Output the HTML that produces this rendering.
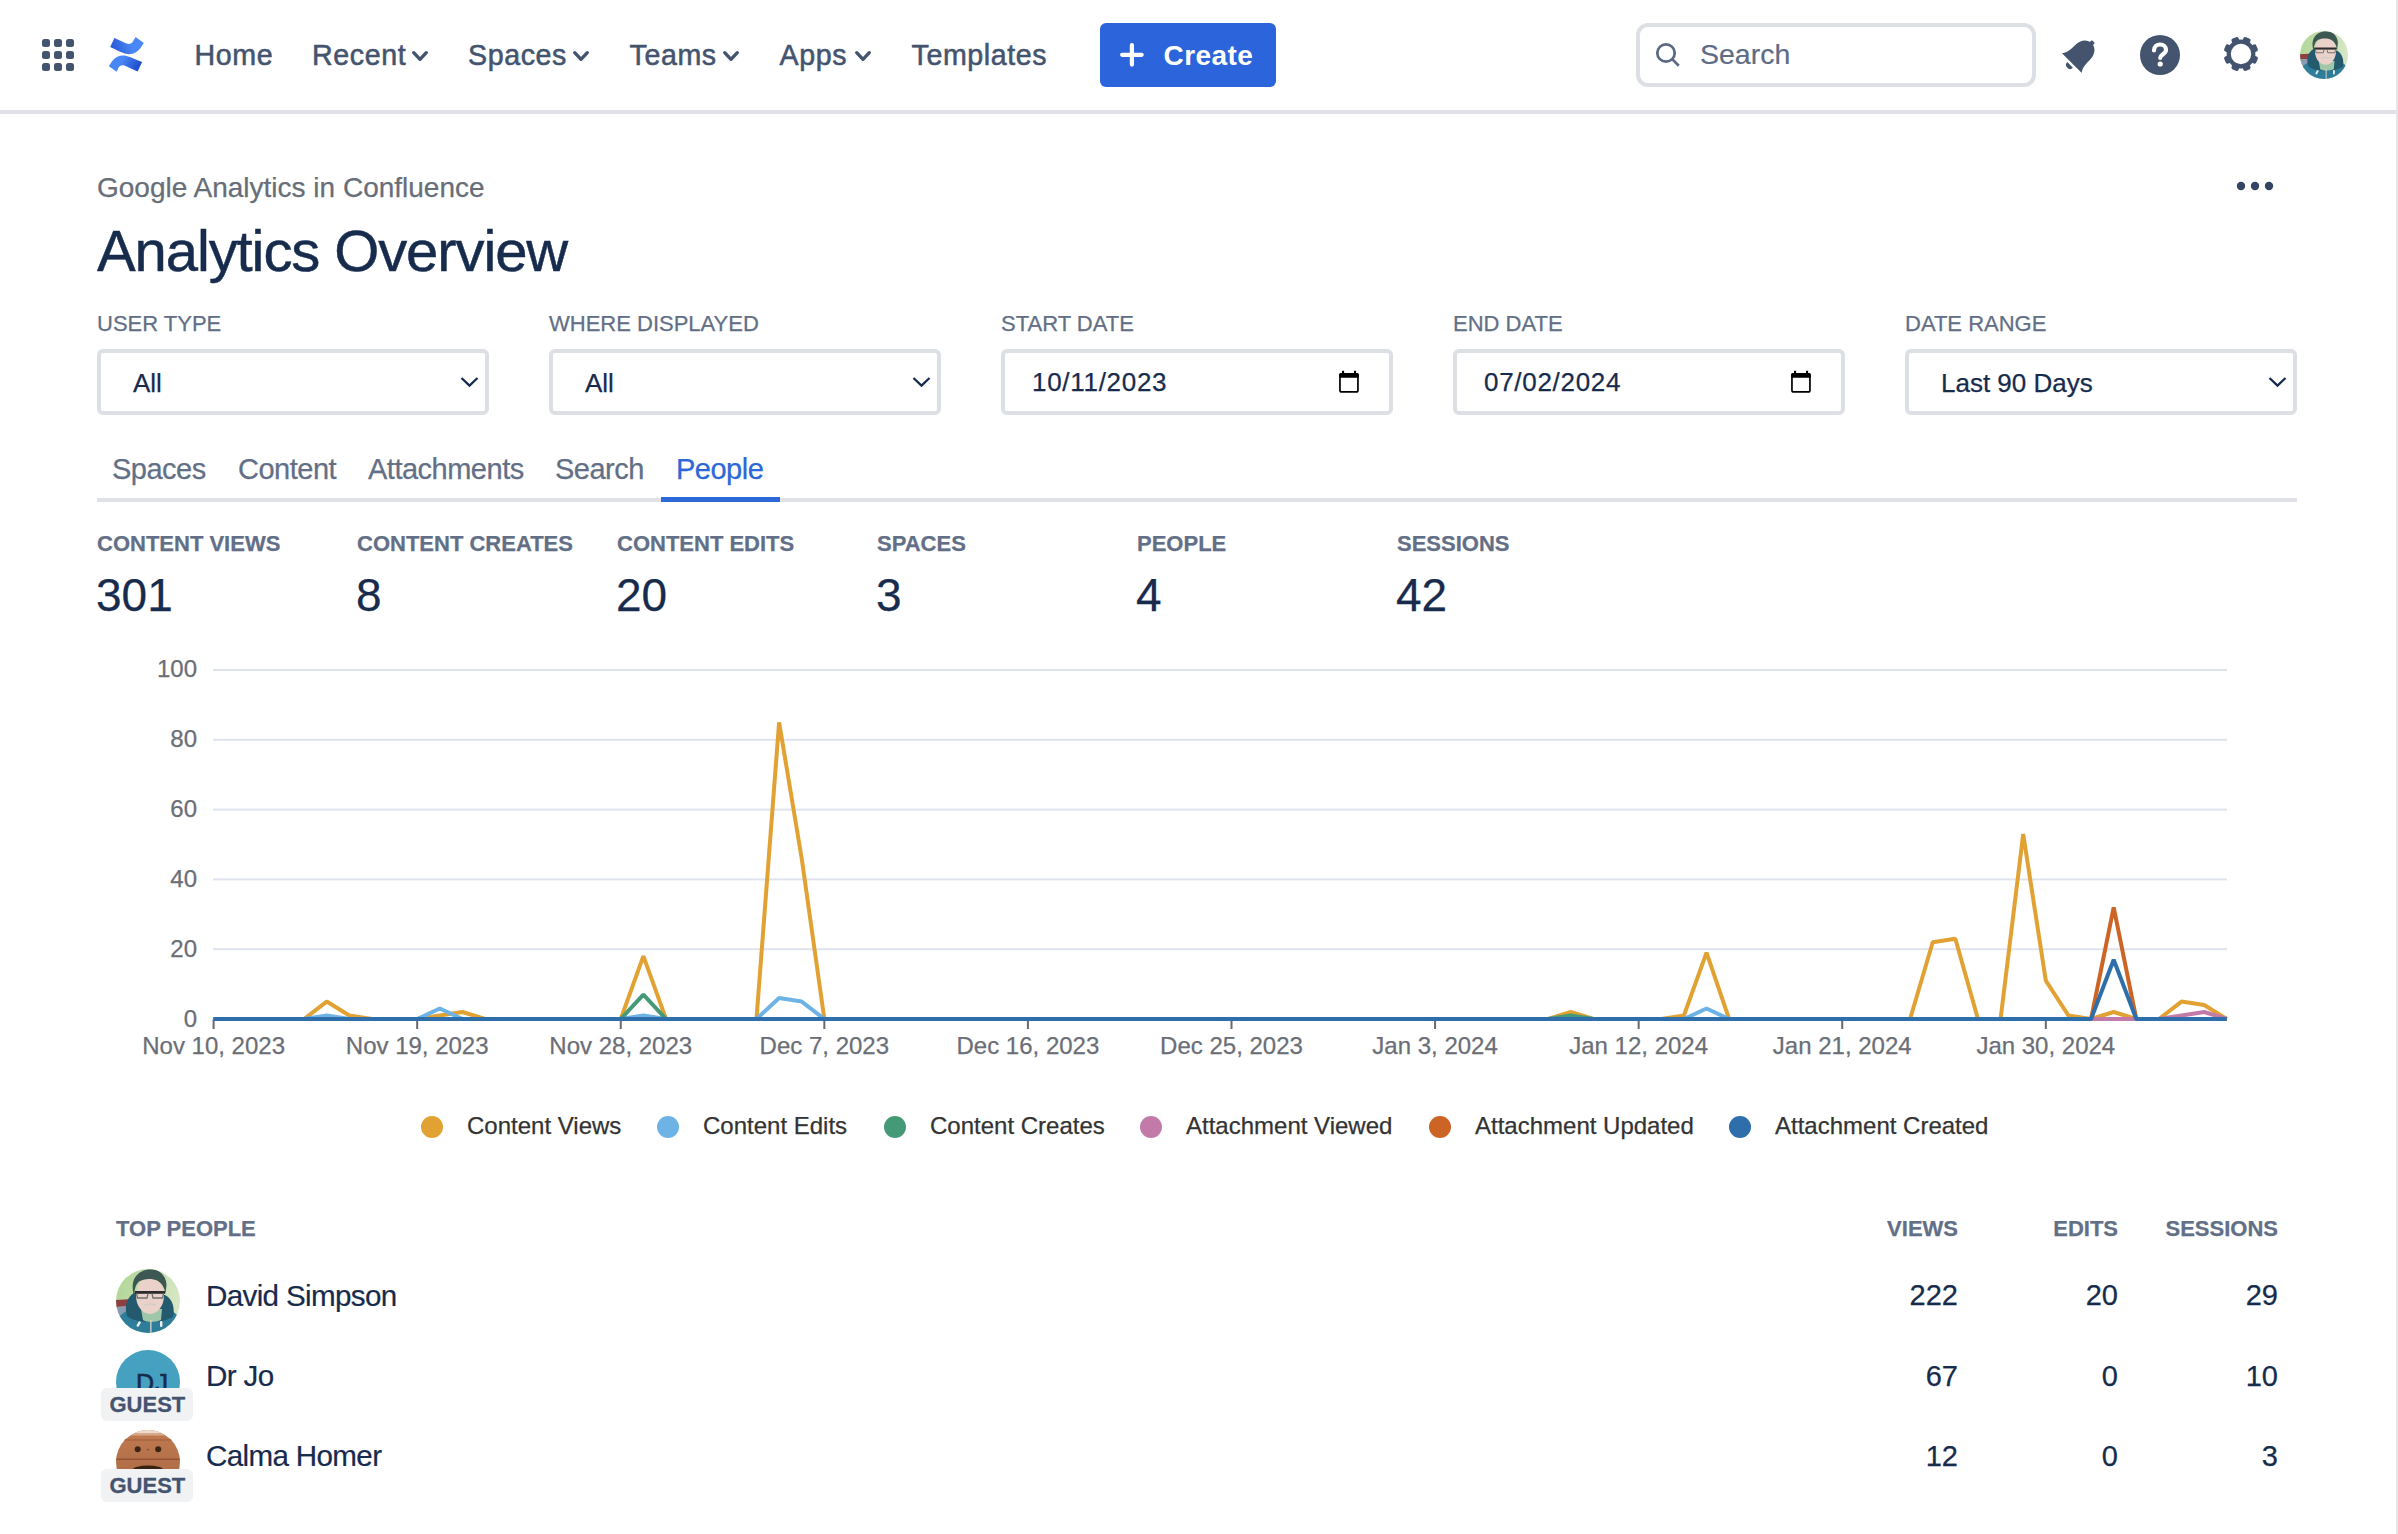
<!DOCTYPE html>
<html><head><meta charset="utf-8"><style>
html,body{margin:0;padding:0;background:#fff;}
body{width:2398px;height:1534px;overflow:hidden;position:relative;font-family:"Liberation Sans", sans-serif;}
.a{position:absolute;}
.t{position:absolute;white-space:nowrap;-webkit-text-stroke-width:0.25px;}
svg{display:block;}
</style></head><body>
<svg class="a" style="left:0;top:0" width="200" height="110"><rect x="42" y="39" width="8" height="8" rx="2.5" fill="#44546f"/><rect x="42" y="51" width="8" height="8" rx="2.5" fill="#44546f"/><rect x="42" y="63" width="8" height="8" rx="2.5" fill="#44546f"/><rect x="54" y="39" width="8" height="8" rx="2.5" fill="#44546f"/><rect x="54" y="51" width="8" height="8" rx="2.5" fill="#44546f"/><rect x="54" y="63" width="8" height="8" rx="2.5" fill="#44546f"/><rect x="66" y="39" width="8" height="8" rx="2.5" fill="#44546f"/><rect x="66" y="51" width="8" height="8" rx="2.5" fill="#44546f"/><rect x="66" y="63" width="8" height="8" rx="2.5" fill="#44546f"/></svg>
<svg class="a" style="left:106px;top:35px" width="40" height="40" viewBox="0 0 40 40">
<defs><linearGradient id="lg1" gradientUnits="userSpaceOnUse" x1="4" y1="12" x2="24" y2="6"><stop offset="0" stop-color="#2456d6"/><stop offset="1" stop-color="#4a87f6"/></linearGradient>
<linearGradient id="lg2" gradientUnits="userSpaceOnUse" x1="16" y1="26" x2="34" y2="36"><stop offset="0" stop-color="#4a87f6"/><stop offset="1" stop-color="#1543c4"/></linearGradient></defs>
<path fill="url(#lg1)" d="M8.4 2.9 L20.5 8.5 C23 9.6 25.3 8.8 26.8 6.8 L29.6 2.1 L37.8 8.1 L34.8 12.6 C31.8 17 27.5 19.3 22.5 19.2 C19.5 19.1 16.8 18 4.2 12 Z"/>
<path fill="url(#lg2)" d="M2.9 31.3 L6 26.3 C9 22 13 20.2 17.5 20.4 C20.5 20.5 23 21.5 36.1 27 L31.6 36.5 L19 30.8 C16.5 29.7 14 30.5 12.6 32.6 L10.7 36.8 Z"/></svg>
<div class="t" style="left:194.5px;top:41.19px;font-size:28.6px;line-height:28.6px;color:#44546f;font-weight:400;letter-spacing:0.6px;-webkit-text-stroke:0.55px #44546f;">Home</div>
<div class="t" style="left:312px;top:41.19px;font-size:28.6px;line-height:28.6px;color:#44546f;font-weight:400;letter-spacing:0.6px;-webkit-text-stroke:0.55px #44546f;">Recent</div>
<svg class="a" style="left:411px;top:50px" width="18" height="12"><path d="M2.70 2.70 L9.00 9.30 L15.30 2.70" fill="none" stroke="#44546f" stroke-width="3.4" stroke-linecap="round" stroke-linejoin="round"/></svg>
<div class="t" style="left:468px;top:41.19px;font-size:28.6px;line-height:28.6px;color:#44546f;font-weight:400;letter-spacing:0.6px;-webkit-text-stroke:0.55px #44546f;">Spaces</div>
<svg class="a" style="left:572px;top:50px" width="18" height="12"><path d="M2.70 2.70 L9.00 9.30 L15.30 2.70" fill="none" stroke="#44546f" stroke-width="3.4" stroke-linecap="round" stroke-linejoin="round"/></svg>
<div class="t" style="left:629.5px;top:41.19px;font-size:28.6px;line-height:28.6px;color:#44546f;font-weight:400;letter-spacing:0.6px;-webkit-text-stroke:0.55px #44546f;">Teams</div>
<svg class="a" style="left:722px;top:50px" width="18" height="12"><path d="M2.70 2.70 L9.00 9.30 L15.30 2.70" fill="none" stroke="#44546f" stroke-width="3.4" stroke-linecap="round" stroke-linejoin="round"/></svg>
<div class="t" style="left:779.5px;top:41.19px;font-size:28.6px;line-height:28.6px;color:#44546f;font-weight:400;letter-spacing:0.6px;-webkit-text-stroke:0.55px #44546f;">Apps</div>
<svg class="a" style="left:854px;top:50px" width="18" height="12"><path d="M2.70 2.70 L9.00 9.30 L15.30 2.70" fill="none" stroke="#44546f" stroke-width="3.4" stroke-linecap="round" stroke-linejoin="round"/></svg>
<div class="t" style="left:911.5px;top:41.19px;font-size:28.6px;line-height:28.6px;color:#44546f;font-weight:400;letter-spacing:0.6px;-webkit-text-stroke:0.55px #44546f;">Templates</div>
<div class="a" style="left:1100px;top:23px;width:176px;height:64px;border-radius:6px;background:#2c64db"></div>
<svg class="a" style="left:1118px;top:41px" width="28" height="28"><path d="M13.9 4.1 V23.6 M4.1 13.8 H23.7" stroke="#fff" stroke-width="4.2" stroke-linecap="round"/></svg>
<div class="t" style="left:1163.5px;top:42.30px;font-size:28px;line-height:28px;color:#fff;font-weight:700;letter-spacing:0.45px;-webkit-text-stroke-width:0;">Create</div>
<div class="a" style="left:1636px;top:23px;width:392px;height:56px;border:4px solid #dcdfe4;border-radius:12px;background:#fff"></div>
<svg class="a" style="left:1652px;top:38px" width="32" height="34"><circle cx="14" cy="15" r="8.7" fill="none" stroke="#5a6882" stroke-width="2.7"/><path d="M20.4 21.4 L26.8 27.8" stroke="#5a6882" stroke-width="2.7" stroke-linecap="butt"/></svg>
<div class="t" style="left:1700px;top:40.07px;font-size:28.5px;line-height:28.5px;color:#5e6c84;font-weight:400;-webkit-text-stroke:0.2px #5e6c84;">Search</div>
<svg class="a" style="left:2058px;top:33px" width="44" height="44" viewBox="0 0 44 44"><g transform="rotate(45 22 22)">
<path d="M8 33.5 L36 33.5 C33 30 32.5 26 32.5 19 C32.5 10.5 28 5.5 22 5.5 C16 5.5 11.5 10.5 11.5 19 C11.5 26 11 30 8 33.5 Z" fill="#44546f"/>
<rect x="19.8" y="3" width="4.4" height="4" rx="1.2" fill="#44546f"/>
<path d="M18 36 A4 4 0 0 0 26 36 Z" fill="#44546f"/></g></svg>
<svg class="a" style="left:2138px;top:33px" width="44" height="44"><circle cx="22" cy="22" r="20" fill="#44546f"/><path d="M16 17.5 C16 13.5 18.8 11.5 22 11.5 C25.5 11.5 28 13.8 28 17 C28 21 22.2 21.5 22.2 25" fill="none" stroke="#fff" stroke-width="4.2" stroke-linecap="round"/><circle cx="22.2" cy="31" r="2.6" fill="#fff"/></svg>
<svg class="a" style="left:2218px;top:31px" width="46" height="46"><rect x="19.2" y="5.6" width="7.6" height="6.5" rx="2" fill="#44546f" transform="rotate(22.5 23 23)"/><rect x="19.2" y="5.6" width="7.6" height="6.5" rx="2" fill="#44546f" transform="rotate(67.5 23 23)"/><rect x="19.2" y="5.6" width="7.6" height="6.5" rx="2" fill="#44546f" transform="rotate(112.5 23 23)"/><rect x="19.2" y="5.6" width="7.6" height="6.5" rx="2" fill="#44546f" transform="rotate(157.5 23 23)"/><rect x="19.2" y="5.6" width="7.6" height="6.5" rx="2" fill="#44546f" transform="rotate(202.5 23 23)"/><rect x="19.2" y="5.6" width="7.6" height="6.5" rx="2" fill="#44546f" transform="rotate(247.5 23 23)"/><rect x="19.2" y="5.6" width="7.6" height="6.5" rx="2" fill="#44546f" transform="rotate(292.5 23 23)"/><rect x="19.2" y="5.6" width="7.6" height="6.5" rx="2" fill="#44546f" transform="rotate(337.5 23 23)"/><circle cx="23" cy="23" r="12.3" fill="none" stroke="#44546f" stroke-width="4.2"/></svg>
<svg class="a" style="left:2300px;top:31px" width="48" height="48" viewBox="0 0 64 64">
<defs><clipPath id="av1"><circle cx="32" cy="32" r="32"/></clipPath>
<linearGradient id="av1g" x1="0" y1="0" x2="1" y2="0.3"><stop offset="0" stop-color="#b0d595"/><stop offset="0.6" stop-color="#c4dfb0"/><stop offset="1" stop-color="#d6e6c4"/></linearGradient></defs>
<g clip-path="url(#av1)"><rect width="64" height="64" fill="url(#av1g)"/>
<path d="M0 31 L17 30 L17 37 L0 38Z" fill="#8e3f42"/>
<path d="M0 38 L15 37 L13 48 L0 50Z" fill="#8a9cb4"/>
<path d="M0 64 L1 50 C6 44 11 42 14 40 L52 40 C57 42 62 46 64 50 L64 64Z" fill="#2e7d9a"/>
<path d="M11 47 C8 37 11 28 18 24 L49 26 C57 30 59 40 57 48 C51 51 44 53 34 53 C24 53 16 51 11 47Z" fill="#235a6e"/>
<path d="M25 40 L46 40 L45 51 C40 53.5 30 53.5 27 51Z" fill="#9fc8aa"/>
<ellipse cx="34" cy="26.5" rx="14" ry="18.5" fill="#ead2ca"/>
<path d="M17.5 25 C15.5 16 17 9 22 5 C26 1 34 -1 40 1 C46 3 50.5 9 50.5 16 L49.5 25 C48.5 19 46.5 15 42 12 C36 9 28 9.5 23 12.5 C20 15 18.5 19 18.5 25Z" fill="#3d5753"/>
<rect x="19" y="22" width="30" height="2.8" fill="#2c2c2c"/>
<path d="M20.5 24.5 L21.5 29 L31 29 L32 24.5 M36 24.5 L37 29 L46.5 29 L47.5 24.5" fill="none" stroke="#707070" stroke-width="1.3"/>
<path d="M28 36.5 C32 35 37 35 40 36.5" stroke="#d6cdc6" stroke-width="1.8" fill="none"/>
<rect x="21.5" y="52" width="2.4" height="6" rx="1.1" fill="#eeeeea" transform="rotate(30 22.7 55)"/>
<rect x="44" y="52" width="2.4" height="6" rx="1.1" fill="#eeeeea"/>
<rect x="34.2" y="51" width="1.3" height="13" fill="#d8d8c8"/></g></svg>
<div class="a" style="left:0;top:110px;width:2396px;height:4px;background:#dfe1e6"></div>
<div class="a" style="left:2396px;top:0;width:2px;height:1534px;background:#e6e6e6"></div>
<div class="t" style="left:97px;top:174.30px;font-size:28px;line-height:28px;color:#676e78;font-weight:400;-webkit-text-stroke:0.25px #676e78;">Google Analytics in Confluence</div>
<div class="t" style="left:97px;top:221.90px;font-size:58px;line-height:58px;color:#172b4d;font-weight:400;letter-spacing:-1.1px;-webkit-text-stroke:0.5px #172b4d;">Analytics Overview</div>
<svg class="a" style="left:2233px;top:176px" width="50" height="20"><circle cx="8" cy="10" r="4.2" fill="#344563"/><circle cx="22" cy="10" r="4.2" fill="#344563"/><circle cx="36" cy="10" r="4.2" fill="#344563"/></svg>
<div class="t" style="left:97px;top:312.98px;font-size:22px;line-height:22px;color:#626f86;font-weight:400;">USER TYPE</div>
<div class="a" style="left:97px;top:349px;width:384px;height:58px;border:4px solid #dcdfe4;border-radius:6px;background:#fff"></div>
<div class="t" style="left:133px;top:369.99px;font-size:26px;line-height:26px;color:#172b4d;font-weight:400;">All</div>
<svg class="a" style="left:460px;top:376px" width="20" height="14"><path d="M1.5 2 L9.5 9.6 L17.5 2" fill="none" stroke="#172b4d" stroke-width="2.3" stroke-linejoin="miter"/></svg>
<div class="t" style="left:549px;top:312.98px;font-size:22px;line-height:22px;color:#626f86;font-weight:400;">WHERE DISPLAYED</div>
<div class="a" style="left:549px;top:349px;width:384px;height:58px;border:4px solid #dcdfe4;border-radius:6px;background:#fff"></div>
<div class="t" style="left:585px;top:369.99px;font-size:26px;line-height:26px;color:#172b4d;font-weight:400;">All</div>
<svg class="a" style="left:912px;top:376px" width="20" height="14"><path d="M1.5 2 L9.5 9.6 L17.5 2" fill="none" stroke="#172b4d" stroke-width="2.3" stroke-linejoin="miter"/></svg>
<div class="t" style="left:1001px;top:312.98px;font-size:22px;line-height:22px;color:#626f86;font-weight:400;">START DATE</div>
<div class="a" style="left:1001px;top:349px;width:384px;height:58px;border:4px solid #dcdfe4;border-radius:6px;background:#fff"></div>
<div class="t" style="left:1032px;top:368.99px;font-size:26px;line-height:26px;color:#172b4d;font-weight:400;letter-spacing:0.7px;">10/11/2023</div>
<svg class="a" style="left:1337px;top:369px" width="24" height="26"><rect x="2.95" y="4.75" width="18" height="18.2" rx="1.8" fill="none" stroke="#000" stroke-width="1.7"/><rect x="2.1" y="3.9" width="19.7" height="4.9" rx="1.5" fill="#000"/><rect x="5" y="1.8" width="2.1" height="3" fill="#000"/><rect x="17" y="1.8" width="2.1" height="3" fill="#000"/></svg>
<div class="t" style="left:1453px;top:312.98px;font-size:22px;line-height:22px;color:#626f86;font-weight:400;">END DATE</div>
<div class="a" style="left:1453px;top:349px;width:384px;height:58px;border:4px solid #dcdfe4;border-radius:6px;background:#fff"></div>
<div class="t" style="left:1484px;top:368.99px;font-size:26px;line-height:26px;color:#172b4d;font-weight:400;letter-spacing:0.7px;">07/02/2024</div>
<svg class="a" style="left:1789px;top:369px" width="24" height="26"><rect x="2.95" y="4.75" width="18" height="18.2" rx="1.8" fill="none" stroke="#000" stroke-width="1.7"/><rect x="2.1" y="3.9" width="19.7" height="4.9" rx="1.5" fill="#000"/><rect x="5" y="1.8" width="2.1" height="3" fill="#000"/><rect x="17" y="1.8" width="2.1" height="3" fill="#000"/></svg>
<div class="t" style="left:1905px;top:312.98px;font-size:22px;line-height:22px;color:#626f86;font-weight:400;">DATE RANGE</div>
<div class="a" style="left:1905px;top:349px;width:384px;height:58px;border:4px solid #dcdfe4;border-radius:6px;background:#fff"></div>
<div class="t" style="left:1941px;top:369.99px;font-size:26px;line-height:26px;color:#172b4d;font-weight:400;">Last 90 Days</div>
<svg class="a" style="left:2268px;top:376px" width="20" height="14"><path d="M1.5 2 L9.5 9.6 L17.5 2" fill="none" stroke="#172b4d" stroke-width="2.3" stroke-linejoin="miter"/></svg>
<div class="t" style="left:112px;top:455.45px;font-size:29px;line-height:29px;color:#626f86;font-weight:400;letter-spacing:-0.5px;">Spaces</div>
<div class="t" style="left:238px;top:455.45px;font-size:29px;line-height:29px;color:#626f86;font-weight:400;letter-spacing:-0.5px;">Content</div>
<div class="t" style="left:368px;top:455.45px;font-size:29px;line-height:29px;color:#626f86;font-weight:400;letter-spacing:-0.5px;">Attachments</div>
<div class="t" style="left:555px;top:455.45px;font-size:29px;line-height:29px;color:#626f86;font-weight:400;letter-spacing:-0.5px;">Search</div>
<div class="t" style="left:676px;top:455.45px;font-size:29px;line-height:29px;color:#2d68d8;font-weight:400;letter-spacing:-0.5px;">People</div>
<div class="a" style="left:97px;top:498px;width:2200px;height:4px;background:#dfe1e6"></div>
<div class="a" style="left:661px;top:497px;width:119px;height:5px;background:#2d68d8"></div>
<div class="t" style="left:97px;top:533.38px;font-size:22px;line-height:22px;color:#626f86;font-weight:700;">CONTENT VIEWS</div>
<div class="t" style="left:96px;top:572.06px;font-size:46px;line-height:46px;color:#172b4d;font-weight:400;">301</div>
<div class="t" style="left:357px;top:533.38px;font-size:22px;line-height:22px;color:#626f86;font-weight:700;">CONTENT CREATES</div>
<div class="t" style="left:356px;top:572.06px;font-size:46px;line-height:46px;color:#172b4d;font-weight:400;">8</div>
<div class="t" style="left:617px;top:533.38px;font-size:22px;line-height:22px;color:#626f86;font-weight:700;">CONTENT EDITS</div>
<div class="t" style="left:616px;top:572.06px;font-size:46px;line-height:46px;color:#172b4d;font-weight:400;">20</div>
<div class="t" style="left:877px;top:533.38px;font-size:22px;line-height:22px;color:#626f86;font-weight:700;">SPACES</div>
<div class="t" style="left:876px;top:572.06px;font-size:46px;line-height:46px;color:#172b4d;font-weight:400;">3</div>
<div class="t" style="left:1137px;top:533.38px;font-size:22px;line-height:22px;color:#626f86;font-weight:700;">PEOPLE</div>
<div class="t" style="left:1136px;top:572.06px;font-size:46px;line-height:46px;color:#172b4d;font-weight:400;">4</div>
<div class="t" style="left:1397px;top:533.38px;font-size:22px;line-height:22px;color:#626f86;font-weight:700;">SESSIONS</div>
<div class="t" style="left:1396px;top:572.06px;font-size:46px;line-height:46px;color:#172b4d;font-weight:400;">42</div>
<svg class="a" style="left:0;top:0" width="2398" height="1100"><rect x="213" y="948.2" width="2014" height="2" fill="#dfe3ee"/><rect x="213" y="878.4" width="2014" height="2" fill="#dfe3ee"/><rect x="213" y="808.6" width="2014" height="2" fill="#dfe3ee"/><rect x="213" y="738.8" width="2014" height="2" fill="#dfe3ee"/><rect x="213" y="669.0" width="2014" height="2" fill="#dfe3ee"/><rect x="212.6" y="1019" width="2" height="10" fill="#666a73"/><rect x="416.18" y="1019" width="2" height="10" fill="#666a73"/><rect x="619.76" y="1019" width="2" height="10" fill="#666a73"/><rect x="823.34" y="1019" width="2" height="10" fill="#666a73"/><rect x="1026.92" y="1019" width="2" height="10" fill="#666a73"/><rect x="1230.5" y="1019" width="2" height="10" fill="#666a73"/><rect x="1434.08" y="1019" width="2" height="10" fill="#666a73"/><rect x="1637.66" y="1019" width="2" height="10" fill="#666a73"/><rect x="1841.24" y="1019" width="2" height="10" fill="#666a73"/><rect x="2044.82" y="1019" width="2" height="10" fill="#666a73"/><polyline points="213.60,1019.00 236.22,1019.00 258.84,1019.00 281.46,1019.00 304.08,1019.00 326.70,1001.55 349.32,1015.51 371.94,1019.00 394.56,1019.00 417.18,1019.00 439.80,1015.51 462.42,1012.02 485.04,1019.00 507.66,1019.00 530.28,1019.00 552.90,1019.00 575.52,1019.00 598.14,1019.00 620.76,1019.00 643.38,956.18 666.00,1019.00 688.62,1019.00 711.24,1019.00 733.86,1019.00 756.48,1019.00 779.10,722.35 801.72,858.46 824.34,1019.00 846.96,1019.00 869.58,1019.00 892.20,1019.00 914.82,1019.00 937.44,1019.00 960.06,1019.00 982.68,1019.00 1005.30,1019.00 1027.92,1019.00 1050.54,1019.00 1073.16,1019.00 1095.78,1019.00 1118.40,1019.00 1141.02,1019.00 1163.64,1019.00 1186.26,1019.00 1208.88,1019.00 1231.50,1019.00 1254.12,1019.00 1276.74,1019.00 1299.36,1019.00 1321.98,1019.00 1344.60,1019.00 1367.22,1019.00 1389.84,1019.00 1412.46,1019.00 1435.08,1019.00 1457.70,1019.00 1480.32,1019.00 1502.94,1019.00 1525.56,1019.00 1548.18,1019.00 1570.80,1012.02 1593.42,1019.00 1616.04,1019.00 1638.66,1019.00 1661.28,1019.00 1683.90,1015.51 1706.52,952.69 1729.14,1019.00 1751.76,1019.00 1774.38,1019.00 1797.00,1019.00 1819.62,1019.00 1842.24,1019.00 1864.86,1019.00 1887.48,1019.00 1910.10,1019.00 1932.72,942.22 1955.34,938.73 1977.96,1019.00 2000.58,1019.00 2023.20,834.03 2045.82,980.61 2068.44,1015.51 2091.06,1019.00 2113.68,1012.02 2136.30,1019.00 2158.92,1019.00 2181.54,1001.55 2204.16,1005.04 2226.78,1019.00" fill="none" stroke="#e2a233" stroke-width="4" stroke-linejoin="bevel" stroke-linecap="butt"/><polyline points="213.60,1019.00 236.22,1019.00 258.84,1019.00 281.46,1019.00 304.08,1019.00 326.70,1015.51 349.32,1019.00 371.94,1019.00 394.56,1019.00 417.18,1019.00 439.80,1008.53 462.42,1019.00 485.04,1019.00 507.66,1019.00 530.28,1019.00 552.90,1019.00 575.52,1019.00 598.14,1019.00 620.76,1019.00 643.38,1015.51 666.00,1019.00 688.62,1019.00 711.24,1019.00 733.86,1019.00 756.48,1019.00 779.10,998.06 801.72,1001.55 824.34,1019.00 846.96,1019.00 869.58,1019.00 892.20,1019.00 914.82,1019.00 937.44,1019.00 960.06,1019.00 982.68,1019.00 1005.30,1019.00 1027.92,1019.00 1050.54,1019.00 1073.16,1019.00 1095.78,1019.00 1118.40,1019.00 1141.02,1019.00 1163.64,1019.00 1186.26,1019.00 1208.88,1019.00 1231.50,1019.00 1254.12,1019.00 1276.74,1019.00 1299.36,1019.00 1321.98,1019.00 1344.60,1019.00 1367.22,1019.00 1389.84,1019.00 1412.46,1019.00 1435.08,1019.00 1457.70,1019.00 1480.32,1019.00 1502.94,1019.00 1525.56,1019.00 1548.18,1019.00 1570.80,1019.00 1593.42,1019.00 1616.04,1019.00 1638.66,1019.00 1661.28,1019.00 1683.90,1019.00 1706.52,1008.53 1729.14,1019.00 1751.76,1019.00 1774.38,1019.00 1797.00,1019.00 1819.62,1019.00 1842.24,1019.00 1864.86,1019.00 1887.48,1019.00 1910.10,1019.00 1932.72,1019.00 1955.34,1019.00 1977.96,1019.00 2000.58,1019.00 2023.20,1019.00 2045.82,1019.00 2068.44,1019.00 2091.06,1019.00 2113.68,1019.00 2136.30,1019.00 2158.92,1019.00 2181.54,1019.00 2204.16,1019.00 2226.78,1019.00" fill="none" stroke="#6db3e6" stroke-width="4" stroke-linejoin="bevel" stroke-linecap="butt"/><polyline points="213.60,1019.00 236.22,1019.00 258.84,1019.00 281.46,1019.00 304.08,1019.00 326.70,1019.00 349.32,1019.00 371.94,1019.00 394.56,1019.00 417.18,1019.00 439.80,1019.00 462.42,1019.00 485.04,1019.00 507.66,1019.00 530.28,1019.00 552.90,1019.00 575.52,1019.00 598.14,1019.00 620.76,1019.00 643.38,994.57 666.00,1019.00 688.62,1019.00 711.24,1019.00 733.86,1019.00 756.48,1019.00 779.10,1019.00 801.72,1019.00 824.34,1019.00 846.96,1019.00 869.58,1019.00 892.20,1019.00 914.82,1019.00 937.44,1019.00 960.06,1019.00 982.68,1019.00 1005.30,1019.00 1027.92,1019.00 1050.54,1019.00 1073.16,1019.00 1095.78,1019.00 1118.40,1019.00 1141.02,1019.00 1163.64,1019.00 1186.26,1019.00 1208.88,1019.00 1231.50,1019.00 1254.12,1019.00 1276.74,1019.00 1299.36,1019.00 1321.98,1019.00 1344.60,1019.00 1367.22,1019.00 1389.84,1019.00 1412.46,1019.00 1435.08,1019.00 1457.70,1019.00 1480.32,1019.00 1502.94,1019.00 1525.56,1019.00 1548.18,1019.00 1570.80,1015.51 1593.42,1019.00 1616.04,1019.00 1638.66,1019.00 1661.28,1019.00 1683.90,1019.00 1706.52,1019.00 1729.14,1019.00 1751.76,1019.00 1774.38,1019.00 1797.00,1019.00 1819.62,1019.00 1842.24,1019.00 1864.86,1019.00 1887.48,1019.00 1910.10,1019.00 1932.72,1019.00 1955.34,1019.00 1977.96,1019.00 2000.58,1019.00 2023.20,1019.00 2045.82,1019.00 2068.44,1019.00 2091.06,1019.00 2113.68,1019.00 2136.30,1019.00 2158.92,1019.00 2181.54,1019.00 2204.16,1019.00 2226.78,1019.00" fill="none" stroke="#449a76" stroke-width="4" stroke-linejoin="bevel" stroke-linecap="butt"/><polyline points="213.60,1019.00 236.22,1019.00 258.84,1019.00 281.46,1019.00 304.08,1019.00 326.70,1019.00 349.32,1019.00 371.94,1019.00 394.56,1019.00 417.18,1019.00 439.80,1019.00 462.42,1019.00 485.04,1019.00 507.66,1019.00 530.28,1019.00 552.90,1019.00 575.52,1019.00 598.14,1019.00 620.76,1019.00 643.38,1019.00 666.00,1019.00 688.62,1019.00 711.24,1019.00 733.86,1019.00 756.48,1019.00 779.10,1019.00 801.72,1019.00 824.34,1019.00 846.96,1019.00 869.58,1019.00 892.20,1019.00 914.82,1019.00 937.44,1019.00 960.06,1019.00 982.68,1019.00 1005.30,1019.00 1027.92,1019.00 1050.54,1019.00 1073.16,1019.00 1095.78,1019.00 1118.40,1019.00 1141.02,1019.00 1163.64,1019.00 1186.26,1019.00 1208.88,1019.00 1231.50,1019.00 1254.12,1019.00 1276.74,1019.00 1299.36,1019.00 1321.98,1019.00 1344.60,1019.00 1367.22,1019.00 1389.84,1019.00 1412.46,1019.00 1435.08,1019.00 1457.70,1019.00 1480.32,1019.00 1502.94,1019.00 1525.56,1019.00 1548.18,1019.00 1570.80,1019.00 1593.42,1019.00 1616.04,1019.00 1638.66,1019.00 1661.28,1019.00 1683.90,1019.00 1706.52,1019.00 1729.14,1019.00 1751.76,1019.00 1774.38,1019.00 1797.00,1019.00 1819.62,1019.00 1842.24,1019.00 1864.86,1019.00 1887.48,1019.00 1910.10,1019.00 1932.72,1019.00 1955.34,1019.00 1977.96,1019.00 2000.58,1019.00 2023.20,1019.00 2045.82,1019.00 2068.44,1019.00 2091.06,1019.00 2113.68,1019.00 2136.30,1019.00 2158.92,1019.00 2181.54,1015.51 2204.16,1012.02 2226.78,1019.00" fill="none" stroke="#c27ba9" stroke-width="4" stroke-linejoin="bevel" stroke-linecap="butt"/><polyline points="213.60,1019.00 236.22,1019.00 258.84,1019.00 281.46,1019.00 304.08,1019.00 326.70,1019.00 349.32,1019.00 371.94,1019.00 394.56,1019.00 417.18,1019.00 439.80,1019.00 462.42,1019.00 485.04,1019.00 507.66,1019.00 530.28,1019.00 552.90,1019.00 575.52,1019.00 598.14,1019.00 620.76,1019.00 643.38,1019.00 666.00,1019.00 688.62,1019.00 711.24,1019.00 733.86,1019.00 756.48,1019.00 779.10,1019.00 801.72,1019.00 824.34,1019.00 846.96,1019.00 869.58,1019.00 892.20,1019.00 914.82,1019.00 937.44,1019.00 960.06,1019.00 982.68,1019.00 1005.30,1019.00 1027.92,1019.00 1050.54,1019.00 1073.16,1019.00 1095.78,1019.00 1118.40,1019.00 1141.02,1019.00 1163.64,1019.00 1186.26,1019.00 1208.88,1019.00 1231.50,1019.00 1254.12,1019.00 1276.74,1019.00 1299.36,1019.00 1321.98,1019.00 1344.60,1019.00 1367.22,1019.00 1389.84,1019.00 1412.46,1019.00 1435.08,1019.00 1457.70,1019.00 1480.32,1019.00 1502.94,1019.00 1525.56,1019.00 1548.18,1019.00 1570.80,1019.00 1593.42,1019.00 1616.04,1019.00 1638.66,1019.00 1661.28,1019.00 1683.90,1019.00 1706.52,1019.00 1729.14,1019.00 1751.76,1019.00 1774.38,1019.00 1797.00,1019.00 1819.62,1019.00 1842.24,1019.00 1864.86,1019.00 1887.48,1019.00 1910.10,1019.00 1932.72,1019.00 1955.34,1019.00 1977.96,1019.00 2000.58,1019.00 2023.20,1019.00 2045.82,1019.00 2068.44,1019.00 2091.06,1019.00 2113.68,907.32 2136.30,1019.00 2158.92,1019.00 2181.54,1019.00 2204.16,1019.00 2226.78,1019.00" fill="none" stroke="#cc6425" stroke-width="4" stroke-linejoin="bevel" stroke-linecap="butt"/><polyline points="213.60,1019.00 236.22,1019.00 258.84,1019.00 281.46,1019.00 304.08,1019.00 326.70,1019.00 349.32,1019.00 371.94,1019.00 394.56,1019.00 417.18,1019.00 439.80,1019.00 462.42,1019.00 485.04,1019.00 507.66,1019.00 530.28,1019.00 552.90,1019.00 575.52,1019.00 598.14,1019.00 620.76,1019.00 643.38,1019.00 666.00,1019.00 688.62,1019.00 711.24,1019.00 733.86,1019.00 756.48,1019.00 779.10,1019.00 801.72,1019.00 824.34,1019.00 846.96,1019.00 869.58,1019.00 892.20,1019.00 914.82,1019.00 937.44,1019.00 960.06,1019.00 982.68,1019.00 1005.30,1019.00 1027.92,1019.00 1050.54,1019.00 1073.16,1019.00 1095.78,1019.00 1118.40,1019.00 1141.02,1019.00 1163.64,1019.00 1186.26,1019.00 1208.88,1019.00 1231.50,1019.00 1254.12,1019.00 1276.74,1019.00 1299.36,1019.00 1321.98,1019.00 1344.60,1019.00 1367.22,1019.00 1389.84,1019.00 1412.46,1019.00 1435.08,1019.00 1457.70,1019.00 1480.32,1019.00 1502.94,1019.00 1525.56,1019.00 1548.18,1019.00 1570.80,1019.00 1593.42,1019.00 1616.04,1019.00 1638.66,1019.00 1661.28,1019.00 1683.90,1019.00 1706.52,1019.00 1729.14,1019.00 1751.76,1019.00 1774.38,1019.00 1797.00,1019.00 1819.62,1019.00 1842.24,1019.00 1864.86,1019.00 1887.48,1019.00 1910.10,1019.00 1932.72,1019.00 1955.34,1019.00 1977.96,1019.00 2000.58,1019.00 2023.20,1019.00 2045.82,1019.00 2068.44,1019.00 2091.06,1019.00 2113.68,959.67 2136.30,1019.00 2158.92,1019.00 2181.54,1019.00 2204.16,1019.00 2226.78,1019.00" fill="none" stroke="#2d6eab" stroke-width="4" stroke-linejoin="bevel" stroke-linecap="butt"/></svg>
<div class="t" style="right:2201px;top:1007.18px;font-size:24px;line-height:24px;color:#6b6e76;font-weight:400;">0</div>
<div class="t" style="right:2201px;top:937.18px;font-size:24px;line-height:24px;color:#6b6e76;font-weight:400;">20</div>
<div class="t" style="right:2201px;top:867.18px;font-size:24px;line-height:24px;color:#6b6e76;font-weight:400;">40</div>
<div class="t" style="right:2201px;top:797.18px;font-size:24px;line-height:24px;color:#6b6e76;font-weight:400;">60</div>
<div class="t" style="right:2201px;top:727.18px;font-size:24px;line-height:24px;color:#6b6e76;font-weight:400;">80</div>
<div class="t" style="right:2201px;top:657.18px;font-size:24px;line-height:24px;color:#6b6e76;font-weight:400;">100</div>
<div class="t" style="left:-286.4px;width:1000px;text-align:center;top:1034.08px;font-size:24px;line-height:24px;color:#6b6e76;font-weight:400;">Nov 10, 2023</div>
<div class="t" style="left:-82.82px;width:1000px;text-align:center;top:1034.08px;font-size:24px;line-height:24px;color:#6b6e76;font-weight:400;">Nov 19, 2023</div>
<div class="t" style="left:120.75999999999999px;width:1000px;text-align:center;top:1034.08px;font-size:24px;line-height:24px;color:#6b6e76;font-weight:400;">Nov 28, 2023</div>
<div class="t" style="left:324.34000000000003px;width:1000px;text-align:center;top:1034.08px;font-size:24px;line-height:24px;color:#6b6e76;font-weight:400;">Dec 7, 2023</div>
<div class="t" style="left:527.9200000000001px;width:1000px;text-align:center;top:1034.08px;font-size:24px;line-height:24px;color:#6b6e76;font-weight:400;">Dec 16, 2023</div>
<div class="t" style="left:731.5px;width:1000px;text-align:center;top:1034.08px;font-size:24px;line-height:24px;color:#6b6e76;font-weight:400;">Dec 25, 2023</div>
<div class="t" style="left:935.0799999999999px;width:1000px;text-align:center;top:1034.08px;font-size:24px;line-height:24px;color:#6b6e76;font-weight:400;">Jan 3, 2024</div>
<div class="t" style="left:1138.66px;width:1000px;text-align:center;top:1034.08px;font-size:24px;line-height:24px;color:#6b6e76;font-weight:400;">Jan 12, 2024</div>
<div class="t" style="left:1342.24px;width:1000px;text-align:center;top:1034.08px;font-size:24px;line-height:24px;color:#6b6e76;font-weight:400;">Jan 21, 2024</div>
<div class="t" style="left:1545.82px;width:1000px;text-align:center;top:1034.08px;font-size:24px;line-height:24px;color:#6b6e76;font-weight:400;">Jan 30, 2024</div>
<div class="a" style="left:421px;top:1116px;width:22px;height:22px;border-radius:50%;background:#e2a233"></div>
<div class="t" style="left:467px;top:1113.68px;font-size:24px;line-height:24px;color:#333333;font-weight:400;">Content Views</div>
<div class="a" style="left:657px;top:1116px;width:22px;height:22px;border-radius:50%;background:#6db3e6"></div>
<div class="t" style="left:703px;top:1113.68px;font-size:24px;line-height:24px;color:#333333;font-weight:400;">Content Edits</div>
<div class="a" style="left:884px;top:1116px;width:22px;height:22px;border-radius:50%;background:#449a76"></div>
<div class="t" style="left:930px;top:1113.68px;font-size:24px;line-height:24px;color:#333333;font-weight:400;">Content Creates</div>
<div class="a" style="left:1140px;top:1116px;width:22px;height:22px;border-radius:50%;background:#c27ba9"></div>
<div class="t" style="left:1186px;top:1113.68px;font-size:24px;line-height:24px;color:#333333;font-weight:400;">Attachment Viewed</div>
<div class="a" style="left:1429px;top:1116px;width:22px;height:22px;border-radius:50%;background:#cc6425"></div>
<div class="t" style="left:1475px;top:1113.68px;font-size:24px;line-height:24px;color:#333333;font-weight:400;">Attachment Updated</div>
<div class="a" style="left:1729px;top:1116px;width:22px;height:22px;border-radius:50%;background:#2d6eab"></div>
<div class="t" style="left:1775px;top:1113.68px;font-size:24px;line-height:24px;color:#333333;font-weight:400;">Attachment Created</div>
<div class="t" style="left:116px;top:1218.38px;font-size:22px;line-height:22px;color:#626f86;font-weight:700;">TOP PEOPLE</div>
<div class="t" style="right:440px;top:1218.38px;font-size:22px;line-height:22px;color:#626f86;font-weight:700;">VIEWS</div>
<div class="t" style="right:280px;top:1218.38px;font-size:22px;line-height:22px;color:#626f86;font-weight:700;">EDITS</div>
<div class="t" style="right:120px;top:1218.38px;font-size:22px;line-height:22px;color:#626f86;font-weight:700;">SESSIONS</div>
<div class="t" style="left:206px;top:1280.94px;font-size:29.6px;line-height:29.6px;color:#172b4d;font-weight:400;letter-spacing:-0.65px;-webkit-text-stroke:0.2px #172b4d;">David Simpson</div>
<div class="t" style="right:440px;top:1281.45px;font-size:29px;line-height:29px;color:#172b4d;font-weight:400;">222</div>
<div class="t" style="right:280px;top:1281.45px;font-size:29px;line-height:29px;color:#172b4d;font-weight:400;">20</div>
<div class="t" style="right:120px;top:1281.45px;font-size:29px;line-height:29px;color:#172b4d;font-weight:400;">29</div>
<div class="t" style="left:206px;top:1360.94px;font-size:29.6px;line-height:29.6px;color:#172b4d;font-weight:400;letter-spacing:-0.65px;-webkit-text-stroke:0.2px #172b4d;">Dr Jo</div>
<div class="t" style="right:440px;top:1362.45px;font-size:29px;line-height:29px;color:#172b4d;font-weight:400;">67</div>
<div class="t" style="right:280px;top:1362.45px;font-size:29px;line-height:29px;color:#172b4d;font-weight:400;">0</div>
<div class="t" style="right:120px;top:1362.45px;font-size:29px;line-height:29px;color:#172b4d;font-weight:400;">10</div>
<div class="t" style="left:206px;top:1440.94px;font-size:29.6px;line-height:29.6px;color:#172b4d;font-weight:400;letter-spacing:-0.65px;-webkit-text-stroke:0.2px #172b4d;">Calma Homer</div>
<div class="t" style="right:440px;top:1442.45px;font-size:29px;line-height:29px;color:#172b4d;font-weight:400;">12</div>
<div class="t" style="right:280px;top:1442.45px;font-size:29px;line-height:29px;color:#172b4d;font-weight:400;">0</div>
<div class="t" style="right:120px;top:1442.45px;font-size:29px;line-height:29px;color:#172b4d;font-weight:400;">3</div>
<svg class="a" style="left:116px;top:1269px" width="64" height="64" viewBox="0 0 64 64">
<defs><clipPath id="av2"><circle cx="32" cy="32" r="32"/></clipPath>
<linearGradient id="av2g" x1="0" y1="0" x2="1" y2="0.3"><stop offset="0" stop-color="#b0d595"/><stop offset="0.6" stop-color="#c4dfb0"/><stop offset="1" stop-color="#d6e6c4"/></linearGradient></defs>
<g clip-path="url(#av2)"><rect width="64" height="64" fill="url(#av2g)"/>
<path d="M0 31 L17 30 L17 37 L0 38Z" fill="#8e3f42"/>
<path d="M0 38 L15 37 L13 48 L0 50Z" fill="#8a9cb4"/>
<path d="M0 64 L1 50 C6 44 11 42 14 40 L52 40 C57 42 62 46 64 50 L64 64Z" fill="#2e7d9a"/>
<path d="M11 47 C8 37 11 28 18 24 L49 26 C57 30 59 40 57 48 C51 51 44 53 34 53 C24 53 16 51 11 47Z" fill="#235a6e"/>
<path d="M25 40 L46 40 L45 51 C40 53.5 30 53.5 27 51Z" fill="#9fc8aa"/>
<ellipse cx="34" cy="26.5" rx="14" ry="18.5" fill="#ead2ca"/>
<path d="M17.5 25 C15.5 16 17 9 22 5 C26 1 34 -1 40 1 C46 3 50.5 9 50.5 16 L49.5 25 C48.5 19 46.5 15 42 12 C36 9 28 9.5 23 12.5 C20 15 18.5 19 18.5 25Z" fill="#3d5753"/>
<rect x="19" y="22" width="30" height="2.8" fill="#2c2c2c"/>
<path d="M20.5 24.5 L21.5 29 L31 29 L32 24.5 M36 24.5 L37 29 L46.5 29 L47.5 24.5" fill="none" stroke="#707070" stroke-width="1.3"/>
<path d="M28 36.5 C32 35 37 35 40 36.5" stroke="#d6cdc6" stroke-width="1.8" fill="none"/>
<rect x="21.5" y="52" width="2.4" height="6" rx="1.1" fill="#eeeeea" transform="rotate(30 22.7 55)"/>
<rect x="44" y="52" width="2.4" height="6" rx="1.1" fill="#eeeeea"/>
<rect x="34.2" y="51" width="1.3" height="13" fill="#d8d8c8"/></g></svg>
<div class="a" style="left:116px;top:1350px;width:64px;height:64px;border-radius:50%;background:#46a0bf;overflow:hidden"><div style="position:absolute;left:20px;top:21px;font:400 25px/25px 'Liberation Sans',sans-serif;letter-spacing:1.5px;color:#172b4d;-webkit-text-stroke:0.6px #172b4d">DJ</div></div>
<svg class="a" style="left:116px;top:1430px" width="64" height="64" viewBox="0 0 64 64"><defs><clipPath id="cav"><circle cx="32" cy="32" r="32"/></clipPath>
<linearGradient id="cwg" x1="0" y1="0" x2="0" y2="1"><stop offset="0" stop-color="#c07a52"/><stop offset="1" stop-color="#a8673f"/></linearGradient></defs>
<g clip-path="url(#cav)"><rect width="64" height="64" fill="url(#cwg)"/>
<rect x="0" y="0" width="64" height="3.5" fill="#ecdcd0"/>
<rect x="0" y="3.5" width="64" height="2" fill="#d8a888"/>
<rect x="0" y="9.5" width="64" height="1" fill="#9b5d3a"/>
<rect x="0" y="28.5" width="64" height="1.4" fill="#8e5232"/>
<circle cx="21.7" cy="19.2" r="3" fill="#3e2414"/><circle cx="42.2" cy="19.2" r="3" fill="#3e2414"/><circle cx="32" cy="19.6" r="0.8" fill="#6a4028"/>
<ellipse cx="32" cy="39.5" rx="15" ry="4" fill="#3a2212"/></g></svg>
<div class="a" style="left:101px;top:1388px;width:92px;height:33px;border-radius:6px;background:#f1f2f4"></div>
<div class="t" style="left:109.5px;top:1393.88px;font-size:22px;line-height:22px;color:#44546f;font-weight:700;-webkit-text-stroke:0.3px #44546f;">GUEST</div>
<div class="a" style="left:101px;top:1469px;width:92px;height:33px;border-radius:6px;background:#f1f2f4"></div>
<div class="t" style="left:109.5px;top:1474.88px;font-size:22px;line-height:22px;color:#44546f;font-weight:700;-webkit-text-stroke:0.3px #44546f;">GUEST</div>
<script>(function(){var w=window.innerWidth;if(w&&Math.abs(w-2398)>4){document.documentElement.style.zoom=(w/2398);}})();</script>
</body></html>
